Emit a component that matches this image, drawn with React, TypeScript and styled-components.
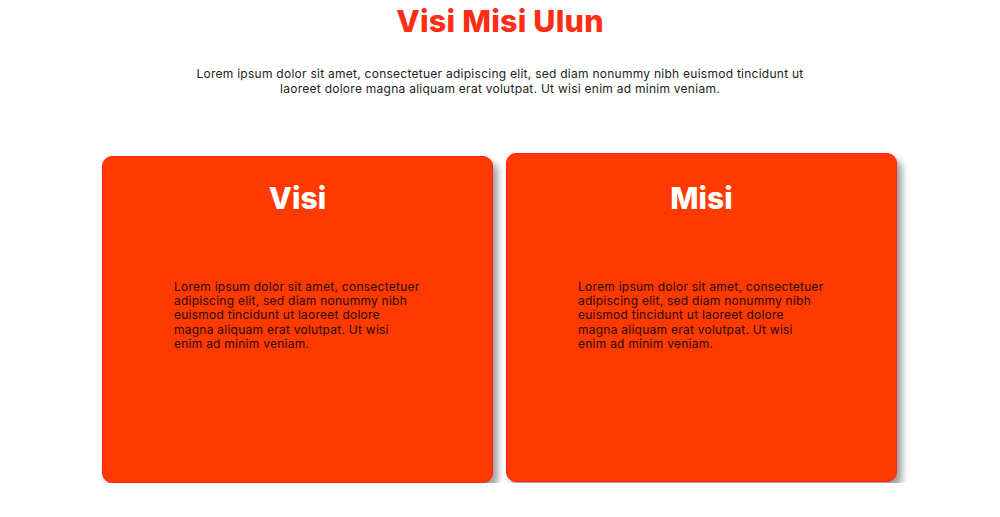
import React from "react";
import styled, { createGlobalStyle } from "styled-components";

const Global = createGlobalStyle`
  html, body { margin: 0; padding: 0; background: #fff; }
  body { font-family: "Inter", "Noto Sans", sans-serif; }
`;

const Page = styled.main`
  display: flex;
  flex-direction: column;
  align-items: center;
  padding-top: 1px;
`;

const Title = styled.h1`
  margin: 0;
  font-size: 30.5px;
  font-weight: 800;
  color: #ff2d14;
  line-height: 40px;
  letter-spacing: 0.2px;
`;

const Lead = styled.p`
  margin: 25px 0 0;
  width: 640px;
  text-align: center;
  font-size: 12px;
  line-height: 15px;
  letter-spacing: 0.26px;
  color: #222;
`;

const Cards = styled.section`
  display: grid;
  grid-template-columns: 391px 391px;
  gap: 13px;
  margin-top: 60px;
  margin-left: -1px;
  align-items: start;
`;

const Card = styled.article<{ $lift?: boolean }>`
  box-sizing: border-box;
  height: ${(p) => (p.$lift ? "329px" : "327px")};
  margin-top: ${(p) => (p.$lift ? "-3px" : "0")};
  background: #ff3a00;
  border: 1px solid #ff1f1f;
  border-radius: 10px;
  box-shadow: 5px 6px 7px rgba(0, 0, 0, 0.38);
  padding: ${(p) => (p.$lift ? "24px" : "21px")} 0 0 71px;
`;

const CardTitle = styled.h2`
  margin: 0 0 0 -71px;
  text-align: center;
  font-size: 30px;
  font-weight: 800;
  color: #fff;
  line-height: 40px;
`;

const CardText = styled.p`
  margin: 62px 0 0;
  max-width: 246px;
  font-size: 12px;
  line-height: 14.2px;
  letter-spacing: 0.25px;
  color: #2a0a00;
`;

const text =
  "Lorem ipsum dolor sit amet, consectetuer adipiscing elit, sed diam nonummy nibh euismod tincidunt ut laoreet dolore magna aliquam erat volutpat. Ut wisi enim ad minim veniam.";

export default function App() {
  return (
    <>
      <Global />
      <Page>
        <Title>Visi Misi Ulun</Title>
        <Lead>{text}</Lead>
        <Cards>
          <Card>
            <CardTitle>Visi</CardTitle>
            <CardText>{text}</CardText>
          </Card>
          <Card $lift>
            <CardTitle>Misi</CardTitle>
            <CardText>{text}</CardText>
          </Card>
        </Cards>
      </Page>
    </>
  );
}
